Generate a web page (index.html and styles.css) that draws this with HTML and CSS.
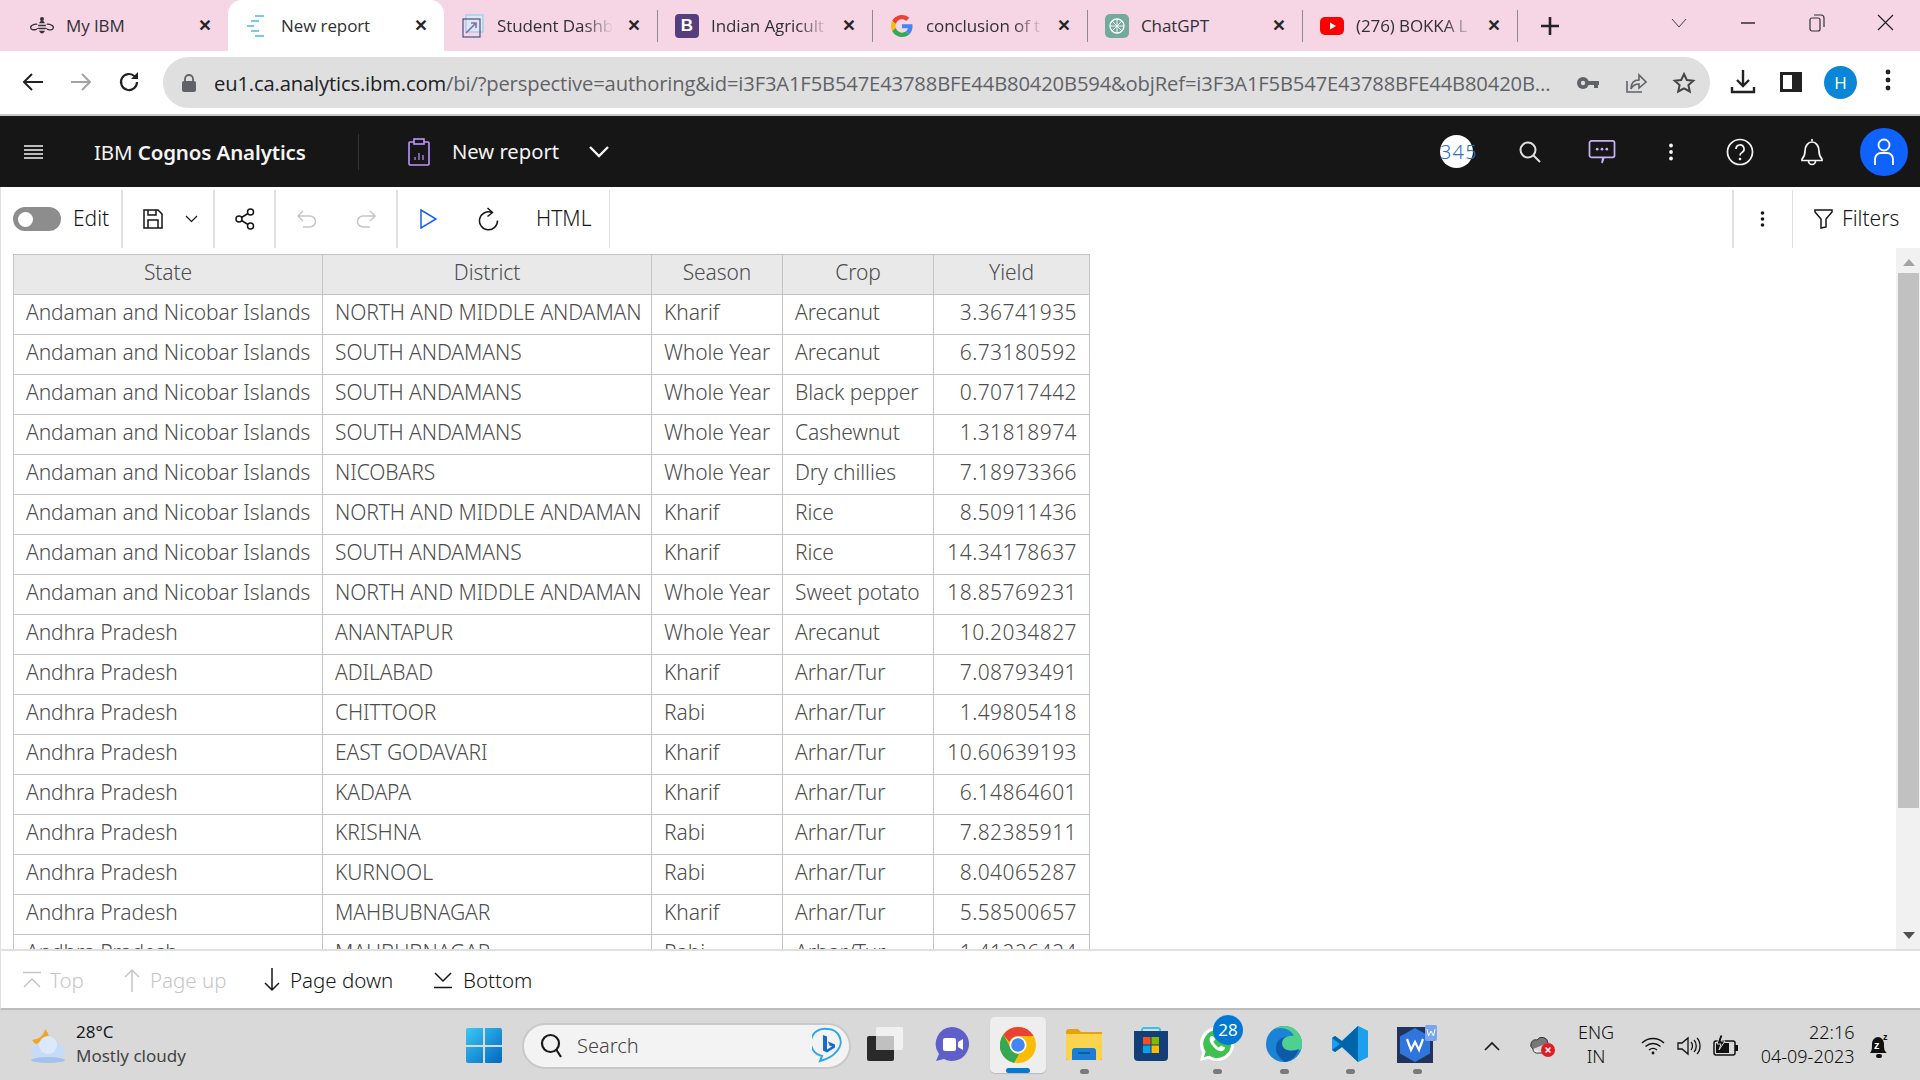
FILE: index.html
```html
<!DOCTYPE html>
<html lang="en">
<head>
<meta charset="utf-8">
<title>New report</title>
<link rel="stylesheet" href="styles.css">
</head>
<body>
<div class="screen">
  <div class="tabstrip">
    <div class="tab">
      <span class="tab-ico"><svg width="24" height="20" viewBox="0 0 24 20" fill="none" stroke="#333" stroke-width="1.3"><ellipse cx="5" cy="11" rx="4.4" ry="2.6" transform="rotate(-15 5 11)"/><ellipse cx="19" cy="11" rx="4.4" ry="2.6" transform="rotate(15 19 11)"/><ellipse cx="12" cy="11" rx="3.6" ry="6.5" fill="#333" stroke="none"/><path d="M7 8h10M7 11h10M7 14h10" stroke="#f6d5e5"/><circle cx="12" cy="3" r="2" fill="#333" stroke="none"/></svg></span>
      <span class="tab-title tab-title-full">My IBM</span><span class="tab-x">✕</span>
    </div>
    <div class="tab tab-active">
      <span class="tab-ico"><svg width="22" height="22" viewBox="0 0 22 22" fill="none" stroke="#4db8ea" stroke-width="1.6"><path d="M9 1h9M5 6h8M1 11h7M5 16h8M9 21h9"/></svg></span>
      <span class="tab-title tab-title-full">New report</span><span class="tab-x">✕</span>
    </div>
    <div class="tab tab-sep tab-third">
      <span class="tab-ico"><svg width="22" height="24" viewBox="0 0 22 24" fill="none"><rect x="4" y="1" width="17" height="17" stroke="#8fd3e8" stroke-width="1.2" fill="#dfe6f5"/><rect x="1" y="5" width="17" height="18" stroke="#4b4f80" stroke-width="1.2"/><path d="M4 19 14 9M9 9h5v5" stroke="#7a6fb0" stroke-width="1.6"/></svg></span>
      <span class="tab-title">Student Dashb</span><span class="tab-x">✕</span>
    </div>
    <div class="tab tab-sep">
      <span class="tab-ico"><span class="fav-b">B</span></span>
      <span class="tab-title">Indian Agricult</span><span class="tab-x">✕</span>
    </div>
    <div class="tab tab-sep">
      <span class="tab-ico"><svg width="22" height="22" viewBox="0 0 48 48"><path fill="#EA4335" d="M24 9.5c3.5 0 6.700 1.200 9.200 3.600l6.900-6.900C35.900 2.400 30.500 0 24 0 14.600 0 6.500 5.400 2.600 13.200l8 6.200C12.400 13.700 17.700 9.500 24 9.500z"/><path fill="#4285F4" d="M47 24.500c0-1.600-.1-3.100-.4-4.500H24v9h12.900c-.6 3-2.200 5.500-4.700 7.200l7.700 6C44.400 37.800 47 31.700 47 24.500z"/><path fill="#FBBC05" d="M10.500 28.600c-.5-1.400-.8-3-.8-4.600s.3-3.200.8-4.600l-8-6.200C.9 16.500 0 20.100 0 24s.9 7.500 2.600 10.800l7.900-6.200z"/><path fill="#34A853" d="M24 48c6.500 0 11.900-2.100 15.900-5.800l-7.700-6c-2.100 1.400-4.900 2.300-8.200 2.300-6.300 0-11.600-4.200-13.500-9.900l-8 6.200C6.500 42.600 14.600 48 24 48z"/></svg></span>
      <span class="tab-title">conclusion of t</span><span class="tab-x">✕</span>
    </div>
    <div class="tab tab-sep">
      <span class="tab-ico"><svg width="24" height="24" viewBox="0 0 24 24" fill="none"><rect width="24" height="24" rx="5" fill="#74aa9c"/><circle cx="12" cy="12" r="7" stroke="#fff" stroke-width="1.3"/><path d="M7 7l10 10M17 7 7 17M12 5v14M5 12h14" stroke="#fff" stroke-width=".9"/></svg></span>
      <span class="tab-title tab-title-full">ChatGPT</span><span class="tab-x">✕</span>
    </div>
    <div class="tab tab-sep">
      <span class="tab-ico"><svg width="24" height="22" viewBox="0 0 24 22"><rect y="2" width="24" height="18" rx="5" fill="#f00"/><path d="M10 7.500v7l6-3.500z" fill="#fff"/></svg></span>
      <span class="tab-title">(276) BOKKA L</span><span class="tab-x">✕</span>
    </div>
    <div class="tab-new"><svg width="20" height="20" viewBox="0 0 20 20" stroke="#222" stroke-width="2.600"><path d="M10 1v18M1 10h18"/></svg></div>
    <div class="win-ctrls">
      <svg class="wc wc-v" width="16" height="12" viewBox="0 0 16 12" fill="none" stroke="#444" stroke-width="1"><path d="M1 2l7 8 7-8"/></svg>
      <svg class="wc wc-min" width="16" height="4" viewBox="0 0 16 4" stroke="#222" stroke-width="1.400"><path d="M1 2h14"/></svg>
      <svg class="wc wc-max" width="16" height="18" viewBox="0 0 16 18" fill="none" stroke="#333" stroke-width="1.200"><rect x="1" y="4" width="10" height="13" rx="2"/><path d="M5 1h7a3 3 0 0 1 3 3v9"/></svg>
      <svg class="wc wc-close" width="17" height="17" viewBox="0 0 17 17" stroke="#222" stroke-width="1.200"><path d="M1 1l15 15M16 1 1 16"/></svg>
    </div>
  </div>

  <div class="addrbar">
    <svg class="nav-ico" width="24" height="24" viewBox="0 0 24 24" fill="none" stroke="#222" stroke-width="2"><path d="M22 12H3M11 4l-8 8 8 8"/></svg>
    <svg class="nav-ico" width="24" height="24" viewBox="0 0 24 24" fill="none" stroke="#a3a3a3" stroke-width="2"><path d="M2 12h19M13 4l8 8-8 8"/></svg>
    <svg class="nav-ico" width="24" height="24" viewBox="0 0 24 24" fill="none" stroke="#222" stroke-width="2.200"><path d="M20 12a8 8 0 1 1-2.400-5.700"/><path d="M21 2v7h-7z" fill="#222" stroke="none"/></svg>
    <div class="urlpill">
      <svg class="lock" width="14" height="18" viewBox="0 0 14 18"><path d="M3 8V5a4 4 0 0 1 8 0v3" fill="none" stroke="#5f6368" stroke-width="1.800"/><rect y="7" width="14" height="11" rx="2" fill="#5f6368"/></svg>
      <span class="url"><span class="url-host">eu1.ca.analytics.ibm.com</span>/bi/?perspective=authoring&amp;id=i3F3A1F5B547E43788BFE44B80420B594&amp;objRef=i3F3A1F5B547E43788BFE44B80420B...</span>
      <svg class="pill-ico" width="24" height="24" viewBox="0 0 24 24" fill="#5f6368"><circle cx="7" cy="12" r="6"/><rect x="10" y="10" width="13" height="4"/><rect x="18" y="12" width="4" height="5"/><circle cx="7" cy="12" r="2.200" fill="#dfdfdf"/></svg>
      <svg class="pill-ico" width="24" height="24" viewBox="0 0 24 24" fill="none" stroke="#5f6368" stroke-width="1.600"><path d="M3 10v11h15"/><path d="M7 18c0-6 3-9 8-9V4l7 7-7 6v-4c-4 0-6 1-8 5z"/></svg>
      <svg class="pill-ico" width="24" height="24" viewBox="0 0 24 24" fill="none" stroke="#444" stroke-width="2"><path d="M12 3l2.800 6 6.500.7-4.900 4.400 1.400 6.400L12 17.300 6.200 20.500l1.400-6.400L2.700 9.700 9.200 9z"/></svg>
    </div>
    <svg class="bar-ico" width="26" height="26" viewBox="0 0 26 26" fill="none" stroke="#222" stroke-width="2.400"><path d="M13 1v15M7 11l6 6 6-6" /><path d="M2 18v5h22v-5"/></svg>
    <svg class="bar-ico bar-side" width="22" height="20" viewBox="0 0 22 20"><rect width="22" height="20" fill="#222"/><rect x="3" y="3" width="9" height="14" fill="#fff"/></svg>
    <span class="avatar-h">H</span>
    <svg class="bar-ico bar-menu" width="6" height="22" viewBox="0 0 6 22" fill="#222"><circle cx="3" cy="3" r="2.400"/><circle cx="3" cy="11" r="2.400"/><circle cx="3" cy="19" r="2.400"/></svg>
  </div>

  <header class="apphead">
    <svg class="ah-menu" width="19" height="16" viewBox="0 0 19 16" stroke="#f4f4f4" stroke-width="1.500"><path d="M0 2h19M0 6h19M0 10h19M0 14h19"/></svg>
    <span class="ah-brand">IBM <b>Cognos Analytics</b></span>
    <span class="ah-sep"></span>
    <svg class="ah-clip" width="22" height="28" viewBox="0 0 22 28" fill="none" stroke="#be95ff" stroke-width="1.600"><rect x="1" y="4" width="20" height="23" rx="1"/><rect x="6" y="1" width="10" height="5" fill="#161616"/><path d="M7 22v-3M11 22v-7M15 22v-5" stroke-width="1.200"/></svg>
    <span class="ah-title">New report</span>
    <svg class="ah-chev" width="20" height="12" viewBox="0 0 20 12" fill="none" stroke="#f4f4f4" stroke-width="2.400"><path d="M1 1l9 9 9-9"/></svg>
    <span class="ah-spacer"></span>
    <span class="badge345"><span class="badge345-txt">345</span></span>
    <svg class="ah-ico ah-search" width="24" height="24" viewBox="0 0 24 24" fill="none" stroke="#e0e0e0" stroke-width="2"><circle cx="10" cy="10" r="7.500"/><path d="M15.500 15.500 22 22"/></svg>
    <svg class="ah-ico ah-chat" width="28" height="26" viewBox="0 0 28 26" fill="none" stroke="#c9b2f3" stroke-width="1.800"><path d="M3 1h22a2 2 0 0 1 2 2v13a2 2 0 0 1-2 2h-9l-2 6 1-6H3a2 2 0 0 1-2-2V3a2 2 0 0 1 2-2z"/><circle cx="9" cy="9.500" r="1.400" fill="#c9b2f3" stroke="none"/><circle cx="14" cy="9.500" r="1.400" fill="#c9b2f3" stroke="none"/><circle cx="19" cy="9.500" r="1.400" fill="#c9b2f3" stroke="none"/></svg>
    <svg class="ah-ico ah-dots" width="6" height="18" viewBox="0 0 6 18" fill="#f4f4f4"><circle cx="3" cy="2.500" r="1.900"/><circle cx="3" cy="9" r="1.900"/><circle cx="3" cy="15.500" r="1.900"/></svg>
    <svg class="ah-ico ah-help" width="28" height="28" viewBox="0 0 28 28" fill="none" stroke="#f4f4f4" stroke-width="1.700"><circle cx="14" cy="14" r="12.500"/><path d="M10 11a4 4 0 1 1 6 3.400c-1.300.8-2 1.500-2 3"/><circle cx="14" cy="21" r="1.300" fill="#f4f4f4" stroke="none"/></svg>
    <svg class="ah-ico ah-bell" width="26" height="28" viewBox="0 0 26 28" fill="none" stroke="#f4f4f4" stroke-width="1.700"><path d="M13 1v2M3 21c2-2 3-4 3-8 0-5 3-9 7-9s7 4 7 9c0 4 1 6 3 8v1.500H3zM9.500 23a3.500 3.500 0 0 0 7 0"/></svg>
    <span class="ah-user"><svg width="22" height="28" viewBox="0 0 22 28" fill="none" stroke="#fff" stroke-width="1.800"><circle cx="11" cy="7" r="5.500"/><path d="M2 27v-6a6 6 0 0 1 6-6h6a6 6 0 0 1 6 6v6"/></svg></span>
  </header>

  <div class="toolbar">
    <div class="tb-group tb-edit"><span class="toggle"><span class="knob"></span></span><span class="tb-text">Edit</span></div>
    <div class="tb-group tb-save">
      <svg width="20" height="20" viewBox="0 0 20 20" fill="none" stroke="#161616" stroke-width="1.500"><path d="M1 1h14l4 4v14H1z"/><path d="M5 1v5h8V1M5 19v-8h10v8"/></svg>
      <svg width="13" height="8" viewBox="0 0 13 8" fill="none" stroke="#161616" stroke-width="1.200"><path d="M1 1l5.500 5.500L12 1"/></svg>
    </div>
    <div class="tb-group tb-share">
      <svg width="20" height="22" viewBox="0 0 20 22" fill="none" stroke="#161616" stroke-width="1.500"><circle cx="15.500" cy="4" r="3"/><circle cx="4" cy="11" r="3"/><circle cx="15.500" cy="18" r="3"/><path d="M6.500 9.500 13 5.500M6.500 12.500 13 16.500"/></svg>
    </div>
    <div class="tb-group tb-undo">
      <svg width="20" height="18" viewBox="0 0 20 18" fill="none" stroke="#c6c6c6" stroke-width="1.500"><path d="M6 1 1 6l5 5M1 6h12a5.500 5.500 0 0 1 0 11H6"/></svg>
      <svg width="20" height="18" viewBox="0 0 20 18" fill="none" stroke="#c6c6c6" stroke-width="1.500"><path d="M14 1l5 5-5 5M19 6H7a5.500 5.500 0 0 0 0 11h7"/></svg>
    </div>
    <div class="tb-group tb-run">
      <svg width="17" height="20" viewBox="0 0 17 20" fill="none" stroke="#0f62fe" stroke-width="1.500"><path d="M1 1l15 9-15 9z"/></svg>
      <svg width="21" height="24" viewBox="0 0 21 24" fill="none" stroke="#161616" stroke-width="1.500"><path d="M14 5.500A9 9 0 1 0 19.500 13.500"/><path d="M9.500 1l5 4.500-5 4"/></svg>
      <span class="tb-text">HTML</span>
    </div>
    <span class="tb-spacer"></span>
    <div class="tb-group tb-more"><svg width="5" height="16" viewBox="0 0 5 16" fill="#161616"><circle cx="2.500" cy="2" r="1.800"/><circle cx="2.500" cy="8" r="1.800"/><circle cx="2.500" cy="14" r="1.800"/></svg></div>
    <div class="tb-group tb-filters"><svg width="19" height="20" viewBox="0 0 19 20" fill="none" stroke="#161616" stroke-width="1.500"><path d="M1 1h17v2l-6 7v8l-5 1v-9L1 3z"/></svg><span class="tb-text">Filters</span></div>
  </div>

  <main class="content">
    <div class="report">
      <table class="grid">
        <thead><tr><th>State</th><th>District</th><th>Season</th><th>Crop</th><th>Yield</th></tr></thead>
        <tbody>
          <tr><td>Andaman and Nicobar Islands</td><td>NORTH AND MIDDLE ANDAMAN</td><td>Kharif</td><td>Arecanut</td><td>3.36741935</td></tr>
          <tr><td>Andaman and Nicobar Islands</td><td>SOUTH ANDAMANS</td><td>Whole Year</td><td>Arecanut</td><td>6.73180592</td></tr>
          <tr><td>Andaman and Nicobar Islands</td><td>SOUTH ANDAMANS</td><td>Whole Year</td><td>Black pepper</td><td>0.70717442</td></tr>
          <tr><td>Andaman and Nicobar Islands</td><td>SOUTH ANDAMANS</td><td>Whole Year</td><td>Cashewnut</td><td>1.31818974</td></tr>
          <tr><td>Andaman and Nicobar Islands</td><td>NICOBARS</td><td>Whole Year</td><td>Dry chillies</td><td>7.18973366</td></tr>
          <tr><td>Andaman and Nicobar Islands</td><td>NORTH AND MIDDLE ANDAMAN</td><td>Kharif</td><td>Rice</td><td>8.50911436</td></tr>
          <tr><td>Andaman and Nicobar Islands</td><td>SOUTH ANDAMANS</td><td>Kharif</td><td>Rice</td><td>14.34178637</td></tr>
          <tr><td>Andaman and Nicobar Islands</td><td>NORTH AND MIDDLE ANDAMAN</td><td>Whole Year</td><td>Sweet potato</td><td>18.85769231</td></tr>
          <tr><td>Andhra Pradesh</td><td>ANANTAPUR</td><td>Whole Year</td><td>Arecanut</td><td>10.2034827</td></tr>
          <tr><td>Andhra Pradesh</td><td>ADILABAD</td><td>Kharif</td><td>Arhar/Tur</td><td>7.08793491</td></tr>
          <tr><td>Andhra Pradesh</td><td>CHITTOOR</td><td>Rabi</td><td>Arhar/Tur</td><td>1.49805418</td></tr>
          <tr><td>Andhra Pradesh</td><td>EAST GODAVARI</td><td>Kharif</td><td>Arhar/Tur</td><td>10.60639193</td></tr>
          <tr><td>Andhra Pradesh</td><td>KADAPA</td><td>Kharif</td><td>Arhar/Tur</td><td>6.14864601</td></tr>
          <tr><td>Andhra Pradesh</td><td>KRISHNA</td><td>Rabi</td><td>Arhar/Tur</td><td>7.82385911</td></tr>
          <tr><td>Andhra Pradesh</td><td>KURNOOL</td><td>Rabi</td><td>Arhar/Tur</td><td>8.04065287</td></tr>
          <tr><td>Andhra Pradesh</td><td>MAHBUBNAGAR</td><td>Kharif</td><td>Arhar/Tur</td><td>5.58500657</td></tr>
          <tr><td>Andhra Pradesh</td><td>MAHBUBNAGAR</td><td>Rabi</td><td>Arhar/Tur</td><td>1.41226424</td></tr>
        </tbody>
      </table>
    </div>
    <div class="scrollbar">
      <span class="sb-up"></span>
      <span class="sb-thumb"></span>
      <span class="sb-track"></span>
      <span class="sb-down"></span>
    </div>
  </main>

  <div class="pager">
    <span class="pg pg-off pg-top"><svg width="20" height="18" viewBox="0 0 20 18" fill="none" stroke="#c6c6c6" stroke-width="1.500"><path d="M1 1.500h18M2 16l8-8 8 8"/></svg>Top</span>
    <span class="pg pg-off pg-up"><svg width="16" height="24" viewBox="0 0 16 24" fill="none" stroke="#c6c6c6" stroke-width="1.500"><path d="M8 24V2M1 9l7-7 7 7"/></svg>Page up</span>
    <span class="pg pg-down"><svg width="16" height="24" viewBox="0 0 16 24" fill="none" stroke="#161616" stroke-width="1.500"><path d="M8 0v22M1 15l7 7 7-7"/></svg>Page down</span>
    <span class="pg pg-bottom"><svg width="20" height="18" viewBox="0 0 20 18" fill="none" stroke="#161616" stroke-width="1.500"><path d="M1 16.500h18M2 2l8 8 8-8"/></svg>Bottom</span>
  </div>

  <footer class="taskbar">
    <div class="weather">
      <svg width="38" height="36" viewBox="0 0 38 36"><path d="M17 1c-1 6-5 10-13 11 3 5 8 7 14 6 4-5 4-12-1-17z" fill="#f2a42a"/><ellipse cx="20" cy="24" rx="17" ry="11" fill="#c5dbf6"/><circle cx="20" cy="17" r="9" fill="#dce9fa"/><ellipse cx="20" cy="32" rx="17" ry="3" fill="#a6c0ee"/></svg>
      <div class="weather-txt"><span class="w-temp">28°C</span><span class="w-sky">Mostly cloudy</span></div>
    </div>
    <svg class="winlogo" width="36" height="35" viewBox="0 0 36 35"><defs><linearGradient id="wg" x1="0" y1="0" x2="1" y2="1"><stop offset="0" stop-color="#3cc8f4"/><stop offset="1" stop-color="#0067c0"/></linearGradient></defs><path fill="url(#wg)" d="M0 2a2 2 0 0 1 2-2h15v17H0zM19 0h15a2 2 0 0 1 2 2v15H19zM0 19h17v16H2a2 2 0 0 1-2-2zM19 19h17v14a2 2 0 0 1-2 2H19z"/></svg>
    <div class="tsearch">
      <svg width="24" height="26" viewBox="0 0 24 26" fill="none" stroke="#1a1a1a" stroke-width="2.200"><circle cx="10.500" cy="10.500" r="8.500"/><path d="M16.500 17 21 24"/></svg>
      <span class="tsearch-txt">Search</span>
      <svg class="bing" width="30" height="38" viewBox="0 0 30 38" fill="none"><path d="M15 2a13 13 0 0 1 10 22c-3 4-9 8-17 10l2-5A13 13 0 0 1 15 2z" stroke="#2aa6ec" stroke-width="2"/><path d="M11 8l4 1.500v13l5-3-2.500-1-1.500-4 7 3v3l-8 5-4-2z" fill="#1769d8"/></svg>
    </div>
    <div class="apps">
      <span class="app"><svg width="36" height="34" viewBox="0 0 36 34"><rect x="0" y="9" width="27" height="25" rx="2" fill="#2a2a2a"/><rect x="9" y="0" width="27" height="23" rx="2" fill="#f4f4f4" fill-opacity=".85"/><rect x="9" y="9" width="18" height="14" fill="#c0c0c0"/></svg></span>
      <span class="app"><svg width="34" height="34" viewBox="0 0 34 34"><path d="M17 0a17 17 0 1 1-8 32l-8 2 3-7A17 17 0 0 1 17 0z" fill="#5f5fc9"/><rect x="8" y="11" width="13" height="13" rx="2" fill="#fff"/><path d="M23 15l5-3v11l-5-3z" fill="#fff"/></svg></span>
      <span class="app app-on"><svg width="36" height="36" viewBox="0 0 36 36"><circle cx="18" cy="18" r="18" fill="#fbbc05"/><path d="M18 0a18 18 0 0 1 15.600 9H18a9 9 0 0 0-8.500 6L3.200 7.800A18 18 0 0 1 18 0z" fill="#ea4335"/><path d="M3.200 7.800 10 19.500a9 9 0 0 0 9 7.500L14 36A18 18 0 0 1 3.200 7.800z" fill="#34a853"/><circle cx="18" cy="18" r="8.500" fill="#fff"/><circle cx="18" cy="18" r="6.800" fill="#4285f4"/></svg><span class="app-run"></span></span>
      <span class="app"><svg width="36" height="32" viewBox="0 0 36 32"><path d="M0 4a3 3 0 0 1 3-3h9l3 3h21v28H0z" fill="#e0a40e"/><path d="M0 6h36v24a2 2 0 0 1-2 2H2a2 2 0 0 1-2-2z" fill="#fdd24f"/><path d="M6 32V23a3 3 0 0 1 3-3h18a3 3 0 0 1 3 3v9z" fill="#1a7fd4"/><path d="M12 25h12" stroke="#0b4f90" stroke-width="1.500"/></svg><span class="app-dot"></span></span>
      <span class="app"><svg width="36" height="36" viewBox="0 0 36 36"><path d="M9 7V4a2 2 0 0 1 2-2h14a2 2 0 0 1 2 2v3" fill="none" stroke="#35c2ee" stroke-width="1.800"/><path d="M1 5h34v26a4 4 0 0 1-4 4H5a4 4 0 0 1-4-4z" fill="#123f78"/><rect x="10" y="11" width="7.500" height="7.500" fill="#f25022"/><rect x="18.500" y="11" width="7.500" height="7.500" fill="#7fba00"/><rect x="10" y="19.500" width="7.500" height="7.500" fill="#00a4ef"/><rect x="18.500" y="19.500" width="7.500" height="7.500" fill="#ffb900"/></svg></span>
      <span class="app"><svg width="36" height="36" viewBox="0 0 36 36"><path d="M18 1a17 17 0 1 1-8.500 31.700L1 35l2.400-8.300A17 17 0 0 1 18 1z" fill="#fff"/><path d="M18 4a14 14 0 1 1-7.500 25.800L5 31l1.600-5.300A14 14 0 0 1 18 4z" fill="#3ec14e"/><path d="M12 10c-2 2-2 5 1 9s7 7 10 6c2-.6 3-2 3-3.500L22 19.500l-2 2c-2-.6-5-4-5.500-6l2-2L14 10z" fill="#fff"/></svg><span class="app-dot"></span><span class="wa-badge">28</span></span>
      <span class="app"><svg width="36" height="36" viewBox="0 0 36 36"><circle cx="18" cy="18" r="18" fill="#1a83d6"/><path d="M18 0c10 0 18 7 18 18v3c0 3-5 4-9 4h-6c-4 0-6-3-6-6 0-6 6-10 13-9C26 5 18 0 9 3c2-2 5-3 9-3z" fill="#50d08e"/><path d="M10 22c0-6 4-11 10-11-5 2-5 9-1 12 4 2 9 2 14 0-3 8-9 13-15 13 2 0-9-6-8-14z" fill="#0f5aa8"/></svg><span class="app-dot"></span></span>
      <span class="app"><svg width="36" height="36" viewBox="0 0 36 36"><path d="M26 0l10 5v26l-10 5-16-15-7 5-3-2V12l3-2 7 5z" fill="#1f9cf0"/><path d="M26 9 14 18l12 9z" fill="#d9d9d9"/><path d="M26 0 36 5v26l-10 5z" fill="#1aa0ef"/><path d="M26 0v36L10 21l-7 5-3-2 8-6-8-6 3-2 7 5z" fill="#0065a9"/></svg><span class="app-dot"></span></span>
      <span class="app"><svg width="40" height="38" viewBox="0 0 40 38"><rect y="2" width="36" height="36" fill="#22345e"/><path d="M18 3l15 8.500v17L18 37 3 28.500v-17z" fill="#2f76dc"/><path d="M10 14l4 11 4-8 4 8 4-11" fill="none" stroke="#fff" stroke-width="2.200"/><rect x="28" y="0" width="12" height="16" rx="2" fill="#7aa5ee"/><path d="M30 4l1.500 7L34 6l2.500 5L38 4" fill="none" stroke="#fff" stroke-width="1"/></svg><span class="app-dot"></span></span>
    </div>
    <div class="tray">
      <svg class="tr-chev" width="16" height="10" viewBox="0 0 16 10" fill="none" stroke="#1a1a1a" stroke-width="1.700"><path d="M1 9l7-7 7 7"/></svg>
      <svg class="tr-cloud" width="26" height="24" viewBox="0 0 26 24"><path d="M3 15a5 5 0 0 1 4-9 6 6 0 0 1 11 3" fill="#777" stroke="#333" stroke-width="1"/><path d="M3 15a4 4 0 0 0 5 4h5" fill="#f0f0f0" stroke="#333" stroke-width="1"/><circle cx="18" cy="16" r="7" fill="#e01b24"/><path d="M15.500 13.500l5 5M20.500 13.500l-5 5" stroke="#fff" stroke-width="1.500"/></svg>
      <div class="tr-lang"><span>ENG</span><span>IN</span></div>
      <svg class="tr-wifi" width="24" height="18" viewBox="0 0 24 18" fill="none" stroke="#111" stroke-width="1.400"><path d="M1 6c6-6 16-6 22 0M4.500 9.500c4.500-4 10.500-4 15 0M8 13c2.500-2 5.500-2 8 0"/><circle cx="12" cy="16" r="1.400" fill="#111" stroke="none"/></svg>
      <svg class="tr-vol" width="24" height="20" viewBox="0 0 24 20" fill="none" stroke="#111" stroke-width="1.300"><path d="M1 7v6h4l6 5V2L5 7zM14 6c2 2 2 6 0 8M17 4c3 3 3 9 0 12M20 2c4 4 4 12 0 16"/></svg>
      <svg class="tr-bat" width="26" height="22" viewBox="0 0 26 22"><rect x="1" y="6" width="21" height="14" rx="2" fill="none" stroke="#111" stroke-width="1.500"/><rect x="3" y="8" width="13" height="10" fill="#111"/><rect x="22" y="10" width="3" height="6" fill="#111"/><path d="M7 0 4 9h4l-2 6 6-9H8l2-6z" fill="#111" stroke="#d9d9d9"/></svg>
      <div class="tr-clock"><span>22:16</span><span>04-09-2023</span></div>
      <svg class="tr-bell" width="20" height="28" viewBox="0 0 20 28"><path d="M1 21c2-2 2-5 2-9 0-4 3-7 6-7s6 3 6 7c0 4 0 7 3 9z" fill="#111"/><rect x="7" y="22" width="6" height="4" rx="2" fill="#111"/><text x="5" y="17" font-size="11" font-family="Liberation Sans, sans-serif" fill="#fff" font-weight="700">z</text><text x="14" y="8" font-size="9" font-family="Liberation Sans, sans-serif" fill="#111" font-weight="700">z</text></svg>
    </div>
  </footer>
</div>
</body>
</html>
```
FILE: styles.css
```css
* { box-sizing: border-box; }
html, body { margin: 0; padding: 0; background: #fff; }
body { font-family: "Noto Sans", "Open Sans", sans-serif; overflow: hidden; }
.screen { width: 1920px; height: 1080px; display: flex; flex-direction: column; overflow: hidden; }

/* Browser tabs */
.tabstrip { height: 51px; flex: none; background: #f6d5e5; display: flex; align-items: stretch; padding-left: 13px; }
.tab { width: 215px; display: flex; align-items: center; padding: 0 15px 0 17px; position: relative; }
.tab-sep { border-right: 1px solid #8f8a8d; margin: 10px 0 9px; }
.tab-third { width: 214px; }
.tab-active { background: #fff; border-radius: 14px 14px 0 0; width: 216px; }
.tab-ico { width: 24px; height: 24px; flex: none; display: flex; align-items: center; justify-content: center; margin-right: 12px; }
.tab-title { flex: 1; min-width: 0; margin-right: 8px; white-space: nowrap; font: 400 17px/24px "Open Sans", sans-serif; color: #303134; letter-spacing: -.1px; -webkit-mask-image: linear-gradient(to right, #000 72%, transparent 96%); mask-image: linear-gradient(to right, #000 72%, transparent 96%); }
.tab-title-full { -webkit-mask-image: none; mask-image: none; }
.tab-x { flex: none; width: 16px; text-align: center; font: 700 16px/16px "DejaVu Sans", sans-serif; color: #222; -webkit-text-stroke: .7px #222; }
.fav-b { width: 24px; height: 24px; border-radius: 4px; background: #563d7c; color: #fff; font: 700 17px/24px "Liberation Sans", sans-serif; text-align: center; }
.tab-new { display: flex; align-items: center; margin-left: 22px; }
.win-ctrls { flex: 1; display: flex; align-items: center; padding-bottom: 6px; }
.wc { flex: none; }
.wc-v { margin-left: 111px; }
.wc-min { margin-left: 53px; }
.wc-max { margin-left: 53px; }
.wc-close { margin-left: 52px; }

/* Address bar */
.addrbar { height: 65px; flex: none; background: #fff; border-bottom: 2px solid #c8c8c8; display: flex; align-items: flex-start; padding: 6px 0 0 21px; }
.nav-ico { flex: none; margin: 13px 24px 0 0; }
.urlpill { width: 1547px; height: 51px; margin-left: -2px; border-radius: 26px; background: #dfdfdf; display: flex; align-items: center; padding: 0 0 0 19px; }
.lock { flex: none; margin-right: 18px; }
.url { width: 1349px; flex: none; white-space: nowrap; overflow: hidden; font: 400 20.200px/26px "Open Sans", sans-serif; color: #5f6368; letter-spacing: -.15px; }
.url-host { color: #202124; }
.pill-ico { flex: none; margin-right: 24px; }
.urlpill .pill-ico:nth-of-type(2) { margin-left: 13px; }
.bar-ico { flex: none; margin: 12px 0 0 20px; }
.bar-side { margin: 15px 0 0 24px; }
.bar-menu { margin-left: 28px; }
.avatar-h { flex: none; width: 33px; height: 33px; border-radius: 50%; background: #0a86d8; color: #fff; font: 400 17px/33px "Open Sans", sans-serif; text-align: center; margin: 9px 0 0 22px; }

/* Application header */
.apphead { height: 71px; flex: none; background: #161616; display: flex; align-items: center; padding-left: 24px; color: #f4f4f4; }
.ah-menu { flex: none; }
.ah-brand { margin-left: 51px; width: 264px; font-size: 20.500px; font-weight: 400; letter-spacing: -.13px; white-space: nowrap; }
.ah-brand b { font-weight: 600; }
.ah-sep { width: 1px; height: 36px; background: #333; }
.ah-clip { margin-left: 49px; flex: none; }
.ah-title { margin-left: 22px; width: 137px; font-size: 20.200px; white-space: nowrap; padding-bottom: 1px; }
.ah-chev { flex: none; margin-left: 0; }
.ah-spacer { flex: 1; }
.badge345 { width: 33px; height: 33px; border-radius: 50%; background: #fff; display: flex; align-items: center; flex: none; overflow: visible; }
.badge345-txt { font: 300 20px/33px "Noto Sans", sans-serif; color: #2f6fc4; letter-spacing: 1.200px; white-space: nowrap; }
.ah-ico { flex: none; }
.ah-search { margin-left: 45px; }
.ah-chat { margin-left: 46px; padding-top: 1px; }
.ah-dots { margin-left: 52px; }
.ah-help { margin-left: 52px; }
.ah-bell { margin-left: 45px; }
.ah-user { width: 48px; height: 48px; border-radius: 50%; background: #0f62fe; margin: 0 12px 0 35px; display: flex; align-items: center; justify-content: center; flex: none; }

/* Report toolbar */
.toolbar { height: 61px; flex: none; display: flex; align-items: stretch; padding-top: 3px; background: #fff; border-left: 1px solid #e0e0e0; }
.tb-group { display: flex; align-items: center; border-right: 2px solid #e0e0e0; color: #161616; flex: none; }
.tb-text { font-size: 21px; font-weight: 300; white-space: nowrap; padding-bottom: 2px; }
.tb-edit { width: 122px; padding-left: 12px; gap: 12px; }
.toggle { width: 48px; height: 24px; border-radius: 12px; background: #8d8d8d; display: flex; align-items: center; padding-left: 5px; flex: none; }
.knob { width: 15px; height: 15px; border-radius: 50%; background: #fff; }
.tb-save { width: 92px; padding-left: 20px; gap: 22px; }
.tb-share { width: 61px; padding-left: 20px; }
.tb-undo { width: 122px; padding-left: 21px; gap: 39px; }
.tb-run { width: 212px; padding-left: 22px; gap: 0; border-right-width: 1px; }
.tb-run svg:nth-child(2) { margin-left: 41px; }
.tb-run .tb-text { margin-left: 37px; }
.tb-spacer { flex: 1; }
.tb-more { width: 61px; justify-content: center; border-left: 2px solid #e0e0e0; border-right: 1px solid #e0e0e0; padding-right: 2px; }
.tb-filters { width: 127px; padding-left: 21px; gap: 9px; border-right: 0; }

/* Table */
.content { height: 701px; flex: none; display: flex; background: #fff; overflow: hidden; border-left: 1px solid #e0e0e0; }
.report { flex: 1; min-width: 0; padding: 6px 0 0 12px; overflow: hidden; }
.grid { border-collapse: collapse; table-layout: fixed; width: 1076px; color: #4d4d4d; font-size: 21px; font-weight: 300; letter-spacing: -.09px; }
.grid th, .grid td { height: 40px; border: 1.500px solid #c4c4c4; padding: 0 12px 5px; white-space: nowrap; overflow: hidden; line-height: 28px; text-align: left; }
.grid th { background: #e9e9e9; font-weight: 300; text-align: center; }
.grid th:nth-child(1) { width: 309px; }
.grid th:nth-child(2) { width: 329px; }
.grid th:nth-child(3) { width: 131px; }
.grid th:nth-child(4) { width: 151px; }
.grid th:nth-child(5) { width: 156px; }
.grid td:nth-child(5) { text-align: right; letter-spacing: .42px; }
.scrollbar { width: 24px; flex: none; background: #f1f1f1; display: flex; flex-direction: column; align-items: center; padding: 0 1px; }
.sb-up { height: 25px; flex: none; width: 100%; position: relative; }
.sb-up::after { content: ""; position: absolute; left: 6px; top: 11px; border: 6px solid transparent; border-top: 0; border-bottom: 7px solid #a3a3a3; }
.sb-thumb { height: 535px; width: 21px; flex: none; background: #c1c1c1; }
.sb-track { flex: 1; }
.sb-down { height: 25px; flex: none; width: 100%; position: relative; }
.sb-down::after { content: ""; position: absolute; left: 6px; top: 8px; border: 6px solid transparent; border-bottom: 0; border-top: 7px solid #505050; }

/* Pager */
.pager { height: 61px; flex: none; border-top: 2px solid #e0e0e0; border-bottom: 2px solid #bdbdbd; border-left: 1px solid #e0e0e0; display: flex; align-items: center; padding-left: 21px; background: #fff; }
.pg { display: flex; align-items: center; font-size: 20.500px; font-weight: 300; white-space: nowrap; color: #161616; }
.pg-off { color: #c6c6c6; }
.pg-top { gap: 8px; width: 102px; }
.pg-up { gap: 10px; width: 140px; padding-left: 0; }
.pg-down { gap: 10px; width: 169px; }
.pg-bottom { gap: 10px; }

/* Taskbar */
.taskbar { height: 71px; flex: none; background: #d9d9d9; display: flex; align-items: center; padding-left: 28px; }
.weather { display: flex; align-items: center; gap: 10px; width: 438px; flex: none; }
.weather-txt { display: flex; flex-direction: column; font-size: 17px; line-height: 24px; padding-bottom: 3px; }
.w-temp { color: #1a1a1a; }
.w-sky { color: #444; }
.winlogo { flex: none; }
.tsearch { width: 329px; height: 46px; margin-left: 20px; border-radius: 23px; background: #f3f3f3; border: 2px solid #c9c9c9; display: flex; align-items: center; padding-left: 16px; flex: none; }
.tsearch-txt { font-size: 20px; color: #444; margin-left: 13px; font-weight: 300; flex: 1; }
.bing { flex: none; margin-right: 7px; }
.apps { display: flex; flex: none; height: 100%; margin-left: 1px; }
.app { width: 66.500px; height: 100%; flex: none; display: flex; align-items: center; justify-content: center; position: relative; padding-bottom: 4px; }
.app-on { background: #eeeeee; border-radius: 5px; width: 56px; height: 56px; margin: 7px 5px 0; padding-bottom: 0; box-shadow: 0 1px 1px #bbb; }
.app-run { position: absolute; left: 16px; bottom: 0; width: 24px; height: 5px; border-radius: 3px; background: #0078d4; }
.app-dot { position: absolute; left: 29px; bottom: 7px; width: 9px; height: 5px; border-radius: 3px; background: #7a7a7a; }
.wa-badge { position: absolute; left: 29px; top: 5px; width: 30px; height: 30px; border-radius: 50%; background: #0078d4; color: #fff; font-size: 17px; line-height: 30px; text-align: center; }
.tray { flex: 1; display: flex; align-items: center; height: 100%; padding-left: 34px; color: #111; }
.tray svg { flex: none; }
.tr-cloud { margin-left: 30px; }
.tr-lang { width: 46px; margin-left: 17px; display: flex; flex-direction: column; align-items: center; font-size: 18px; line-height: 24px; font-weight: 300; padding-bottom: 4px; }
.tr-wifi { margin-left: 22px; }
.tr-vol { margin-left: 11.500px; }
.tr-bat { margin-left: 12.500px; }
.tr-clock { width: 113.500px; margin-left: 2px; display: flex; flex-direction: column; align-items: flex-end; font-size: 18px; line-height: 24px; font-weight: 300; padding-bottom: 4px; }
.tr-bell { margin-left: 14px; }
```
